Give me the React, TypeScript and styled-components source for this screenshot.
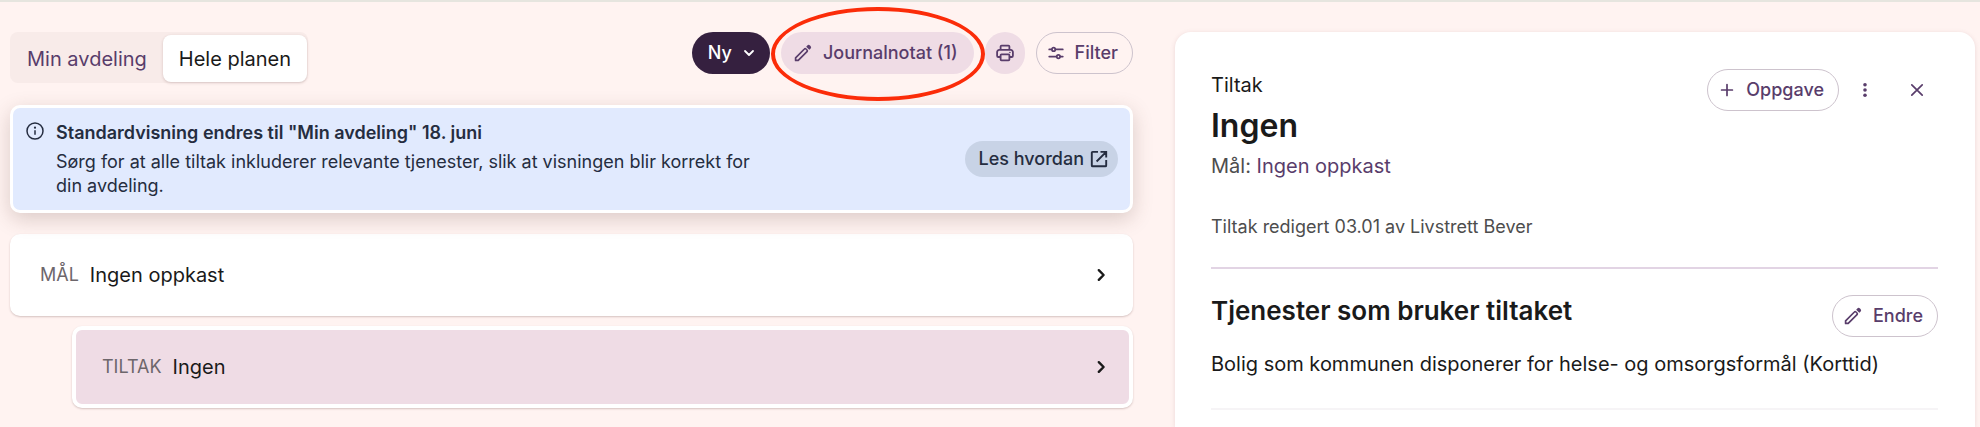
import React from "react";
import styled, { createGlobalStyle, css } from "styled-components";

const color = {
  page: "#fff3f1",
  plum: "#593d6b",
  plumDark: "#35203f",
  mauve: "#efdce5",
  ink: "#1a1a1a",
  muted: "#4d4d4d",
  navy: "#252d40",
};

const GlobalStyle = createGlobalStyle`
  *, *::before, *::after { box-sizing: border-box; }
  body {
    margin: 0;
    background: ${color.page};
    color: ${color.ink};
    font-family: Inter, "Liberation Sans", sans-serif;
    font-size: 20px;
    line-height: 24px;
    font-optical-sizing: none;
  }
  h1, h2, p { margin: 0; }
  button { font: inherit; cursor: pointer; }
  a { color: inherit; text-decoration: none; }
  svg { display: block; flex: none; }
`;

const Page = styled.div`
  display: grid;
  grid-template-columns: minmax(0, 1123fr) minmax(0, 800fr);
  gap: 42px;
  min-height: 100vh;
  padding: 30px 5px 0 10px;
  border-top: 2px solid #e6e5df;
`;

const PlanColumn = styled.main`
  display: flex;
  flex-direction: column;
  padding-bottom: 18px;
`;

const Toolbar = styled.div`
  display: flex;
  align-items: flex-start;
  justify-content: space-between;
  margin-bottom: 22px;
`;

const Tabs = styled.div`
  display: flex;
  padding: 3px 1px 1px;
  border-radius: 8px;
  background: #f8ebe9;
`;

const Tab = styled.button<{ $active?: boolean }>`
  height: 47px;
  padding: 0 16px;
  border: 0;
  border-radius: 8px;
  background: transparent;
  color: ${color.plum};
  ${(p) =>
    p.$active &&
    css`
      background: #fff;
      color: ${color.ink};
      box-shadow: 0 1px 3px rgba(90, 50, 50, 0.22);
    `}
`;

const Actions = styled.div`
  display: flex;
  gap: 11px;
`;

type Tone = "dark" | "soft" | "outline";

const tones = {
  dark: css`
    background: ${color.plumDark};
    color: #fff;
  `,
  soft: css`
    background: ${color.mauve};
    color: ${color.plum};
  `,
  outline: css`
    padding: 0 14px 0 11px;
    background: transparent;
    border-color: #cdc3cd;
    color: ${color.plum};
  `,
};

const Pill = styled.button<{ $tone: Tone }>`
  display: inline-flex;
  align-items: center;
  justify-content: center;
  gap: 11px;
  height: 42px;
  padding: 0 15px 0 12px;
  border: 1px solid transparent;
  border-radius: 21px;
  font-size: 18px;
  font-weight: 500;
  white-space: nowrap;
  ${(p) => tones[p.$tone]}
`;

const MenuPill = styled(Pill)`
  padding: 0 14px 0 15px;
`;

const RoundPill = styled(Pill)`
  width: 40px;
  padding: 0;
`;

const Marked = styled.div`
  position: relative;
  display: flex;
`;

const Ring = styled.span`
  position: absolute;
  inset: -25px -11px -27px -10px;
  border: 4px solid #fb2c09;
  border-radius: 50%;
  pointer-events: none;
  z-index: 2;
`;

const Notice = styled.section`
  position: relative;
  z-index: 1;
  display: flex;
  align-items: center;
  height: 108px;
  margin-bottom: 21px;
  padding: 0 12px;
  border: 3px solid #fff;
  border-radius: 10px;
  background: #e1eafe;
  color: ${color.navy};
  box-shadow: 0 6px 20px rgba(90, 60, 50, 0.22);
`;

const NoticeIcon = styled.span`
  align-self: flex-start;
  margin: 13px 11px 0 0;
`;

const NoticeText = styled.div`
  flex: 1;
  font-size: 18px;
`;

const NoticeTitle = styled.h2`
  margin-bottom: 5px;
  font-size: 18px;
  font-weight: 600;
  line-height: 24px;
`;

const NoticeBody = styled.p`
  max-width: 720px;
`;

const NoticeLink = styled.a`
  display: inline-flex;
  align-items: center;
  gap: 6px;
  height: 36px;
  padding: 0 10px 0 14px;
  border-radius: 18px;
  background: #c8d3e6;
  font-size: 18px;
  font-weight: 500;
  white-space: nowrap;
`;

const PlanRow = styled.button<{ $nested?: boolean }>`
  display: flex;
  align-items: center;
  gap: 11px;
  height: 82px;
  padding: 0 23px 0 26px;
  border: 4px solid #fff;
  border-radius: 10px;
  background: #fff;
  color: ${color.ink};
  text-align: left;
  box-shadow: 0 1px 2px rgba(90, 50, 50, 0.25);
  ${(p) =>
    p.$nested &&
    css`
      margin: 10px 0 0 62px;
      background: ${color.mauve};
    `}
`;

const RowKind = styled.span`
  color: #6d666b;
  font-size: 18px;
`;

const RowName = styled.span`
  flex: 1;
`;

const Panel = styled.aside`
  padding: 37px 37px 0 36px;
  border-radius: 16px 16px 0 0;
  background: #fff;
  box-shadow: 0 1px 5px rgba(120, 60, 70, 0.14);
`;

const PanelHead = styled.header`
  display: flex;
  align-items: flex-start;
  justify-content: space-between;
`;

const PanelHeading = styled.div`
  padding-top: 4px;
`;

const PanelTitle = styled.h1`
  margin: 9px 0 4px;
  font-size: 32px;
  font-weight: 600;
  line-height: 40px;
`;

const Goal = styled.p`
  line-height: 32px;
  color: ${color.muted};
`;

const GoalLink = styled.a`
  color: ${color.plum};
`;

const PanelActions = styled.div`
  display: flex;
  align-items: center;
  gap: 5px;
`;

const IconButtons = styled.div`
  display: flex;
  gap: 10px;
`;

const IconButton = styled.button`
  display: flex;
  align-items: center;
  justify-content: center;
  width: 42px;
  height: 42px;
  padding: 0;
  border: 0;
  border-radius: 50%;
  background: transparent;
  color: ${color.plum};
`;

const Edited = styled.p`
  padding: 33px 0 28px;
  border-bottom: 2px solid #e2d4e4;
  font-size: 18px;
  color: ${color.muted};
`;

const Services = styled.section`
  padding: 26px 0 32px;
  border-bottom: 2px solid #f6f4f6;
`;

const ServicesHead = styled.div`
  display: flex;
  align-items: flex-start;
  justify-content: space-between;
  margin-bottom: 15px;
`;

const ServicesTitle = styled.h2`
  font-size: 26px;
  font-weight: 600;
  line-height: 32px;
`;

const Pencil = () => (
  <svg width="18" height="18" viewBox="0 0 18 18" aria-hidden="true">
    <path
      d="M1.6 16.4v-2.6L10.4 5a1.1 1.1 0 0 1 1.6 0l1 1a1.1 1.1 0 0 1 0 1.6l-8.8 8.8z"
      fill="none"
      stroke="currentColor"
      strokeWidth="1.7"
      strokeLinejoin="round"
    />
    <path
      d="M12.2 2.7 13.3 1.5a1.9 1.9 0 0 1 2.7 0l.5.5a1.9 1.9 0 0 1 0 2.7L15.3 5.8z"
      fill="currentColor"
    />
  </svg>
);

const Printer = () => (
  <svg
    width="18"
    height="18"
    viewBox="0 0 18 18"
    fill="none"
    stroke="currentColor"
    strokeWidth="1.8"
    strokeLinejoin="round"
    aria-hidden="true"
  >
    <path d="M4.6 5.9V2.6a1 1 0 0 1 1-1h6.8a1 1 0 0 1 1 1v3.3" />
    <path d="M4.6 13H2.4a1.3 1.3 0 0 1-1.3-1.3V8a2.1 2.1 0 0 1 2.1-2.1h11.6A2.1 2.1 0 0 1 16.9 8v3.7a1.3 1.3 0 0 1-1.3 1.3h-2.2" />
    <rect x="4.6" y="10.3" width="8.8" height="6.1" rx="0.9" />
    <circle cx="13.9" cy="8.5" r="0.5" fill="currentColor" strokeWidth="0.6" />
  </svg>
);

const Sliders = () => (
  <svg
    width="16"
    height="16"
    viewBox="0 0 16 16"
    fill="none"
    stroke="currentColor"
    strokeWidth="1.7"
    strokeLinecap="round"
    aria-hidden="true"
  >
    <path d="M1.2 4.4h2.6M7.4 4.4h7.4M1.2 11.6h7.4M12.2 11.6h2.6" />
    <circle cx="5.6" cy="4.4" r="1.7" />
    <circle cx="10.4" cy="11.6" r="1.7" />
  </svg>
);

const ChevronDown = () => (
  <svg width="12" height="12" viewBox="0 0 12 12" aria-hidden="true">
    <path
      d="M2 4l4 4 4-4"
      fill="none"
      stroke="currentColor"
      strokeWidth="1.8"
      strokeLinecap="round"
      strokeLinejoin="round"
    />
  </svg>
);

const ChevronRight = () => (
  <svg width="9" height="14" viewBox="0 0 9 14" aria-hidden="true">
    <path
      d="M1.8 2.2 6.6 7l-4.8 4.8"
      fill="none"
      stroke="currentColor"
      strokeWidth="2.4"
      strokeLinecap="round"
      strokeLinejoin="round"
    />
  </svg>
);

const Info = () => (
  <svg width="20" height="20" viewBox="0 0 20 20" aria-hidden="true">
    <circle cx="10" cy="10" r="8" fill="none" stroke="currentColor" strokeWidth="1.5" />
    <circle cx="10" cy="6.7" r="1.1" fill="currentColor" />
    <path d="M10 9.2v4.6" stroke="currentColor" strokeWidth="1.5" />
  </svg>
);

const External = () => (
  <svg
    width="18"
    height="18"
    viewBox="0 0 18 18"
    fill="none"
    stroke="currentColor"
    strokeWidth="1.9"
    aria-hidden="true"
  >
    <path d="M8 1.9H2.7a.9.9 0 0 0-.9.9v12.6c0 .5.4.9.9.9h12.6c.5 0 .9-.4.9-.9V10M10.5 1.9h5.7v5.7M16.2 1.9 6.6 11.5" />
  </svg>
);

const Plus = () => (
  <svg width="16" height="16" viewBox="0 0 16 16" aria-hidden="true">
    <path d="M8 2.6v10.8M2.6 8h10.8" stroke="currentColor" strokeWidth="1.7" strokeLinecap="round" />
  </svg>
);

const Dots = () => (
  <svg width="16" height="16" viewBox="0 0 16 16" fill="currentColor" aria-hidden="true">
    <circle cx="8" cy="2.8" r="1.8" />
    <circle cx="8" cy="8" r="1.8" />
    <circle cx="8" cy="13.2" r="1.8" />
  </svg>
);

const Cross = () => (
  <svg width="16" height="16" viewBox="0 0 16 16" aria-hidden="true">
    <path d="m2.8 2.8 10.4 10.4M13.2 2.8 2.8 13.2" stroke="currentColor" strokeWidth="1.7" strokeLinecap="round" />
  </svg>
);

export default function App() {
  return (
    <>
      <GlobalStyle />
      <Page>
        <PlanColumn>
          <Toolbar>
            <Tabs>
              <Tab type="button">Min avdeling</Tab>
              <Tab type="button" $active>
                Hele planen
              </Tab>
            </Tabs>
            <Actions>
              <MenuPill type="button" $tone="dark">
                Ny
                <ChevronDown />
              </MenuPill>
              <Marked>
                <Pill type="button" $tone="soft">
                  <Pencil />
                  Journalnotat (1)
                </Pill>
                <Ring />
              </Marked>
              <RoundPill type="button" $tone="soft" aria-label="Skriv ut">
                <Printer />
              </RoundPill>
              <Pill type="button" $tone="outline">
                <Sliders />
                Filter
              </Pill>
            </Actions>
          </Toolbar>

          <Notice>
            <NoticeIcon>
              <Info />
            </NoticeIcon>
            <NoticeText>
              <NoticeTitle>Standardvisning endres til "Min avdeling" 18. juni</NoticeTitle>
              <NoticeBody>
                Sørg for at alle tiltak inkluderer relevante tjenester, slik at visningen blir korrekt for din
                avdeling.
              </NoticeBody>
            </NoticeText>
            <NoticeLink href="#les-hvordan">
              Les hvordan
              <External />
            </NoticeLink>
          </Notice>

          <PlanRow type="button">
            <RowKind>MÅL</RowKind>
            <RowName>Ingen oppkast</RowName>
            <ChevronRight />
          </PlanRow>
          <PlanRow type="button" $nested>
            <RowKind>TILTAK</RowKind>
            <RowName>Ingen</RowName>
            <ChevronRight />
          </PlanRow>
        </PlanColumn>

        <Panel>
          <PanelHead>
            <PanelHeading>
              <p>Tiltak</p>
              <PanelTitle>Ingen</PanelTitle>
              <Goal>
                Mål: <GoalLink href="#ingen-oppkast">Ingen oppkast</GoalLink>
              </Goal>
            </PanelHeading>
            <PanelActions>
              <Pill type="button" $tone="outline">
                <Plus />
                Oppgave
              </Pill>
              <IconButtons>
                <IconButton type="button" aria-label="Flere valg">
                  <Dots />
                </IconButton>
                <IconButton type="button" aria-label="Lukk">
                  <Cross />
                </IconButton>
              </IconButtons>
            </PanelActions>
          </PanelHead>
          <Edited>Tiltak redigert 03.01 av Livstrett Bever</Edited>
          <Services>
            <ServicesHead>
              <ServicesTitle>Tjenester som bruker tiltaket</ServicesTitle>
              <Pill type="button" $tone="outline">
                <Pencil />
                Endre
              </Pill>
            </ServicesHead>
            <p>Bolig som kommunen disponerer for helse- og omsorgsformål (Korttid)</p>
          </Services>
        </Panel>
      </Page>
    </>
  );
}
